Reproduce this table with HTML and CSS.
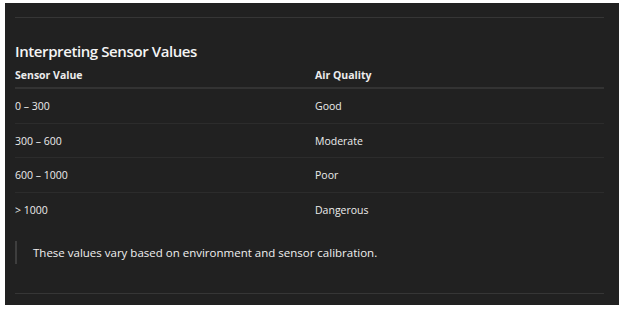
FILE: index.html
```html
<!DOCTYPE html>
<html lang="en">
<head>
<meta charset="utf-8">
<title>Interpreting Sensor Values</title>
<link rel="stylesheet" href="styles.css">
</head>
<body>
<main class="panel">
  <hr class="rule">
  <h3 class="title">Interpreting Sensor Values</h3>
  <div class="table">
    <div class="row head">
      <div class="cell">Sensor Value</div>
      <div class="cell">Air Quality</div>
    </div>
    <div class="row">
      <div class="cell">0 – 300</div>
      <div class="cell">Good</div>
    </div>
    <div class="row">
      <div class="cell">300 – 600</div>
      <div class="cell">Moderate</div>
    </div>
    <div class="row">
      <div class="cell">600 – 1000</div>
      <div class="cell">Poor</div>
    </div>
    <div class="row last">
      <div class="cell">&gt; 1000</div>
      <div class="cell">Dangerous</div>
    </div>
  </div>
  <blockquote class="note">These values vary based on environment and sensor calibration.</blockquote>
  <hr class="rule end">
</main>
</body>
</html>
```
FILE: styles.css
```css
html, body {
  margin: 0;
  background: #ffffff;
}

body {
  padding: 3px 9px 10px 5px;
  font-family: "Open Sans", "Noto Sans", sans-serif;
  color: #ececec;
}

.panel {
  background: #212121;
  height: 302px;
  box-sizing: border-box;
  padding: 14px 15px 0 10px;
  display: flex;
  flex-direction: column;
}

.rule {
  margin: 0;
  border: 0;
  height: 1px;
  background: #363636;
}

.title {
  margin: 23px 0 0;
  font-size: 15px;
  font-weight: 600;
  line-height: 20px;
  color: #f4f4f4;
  letter-spacing: -0.4px;
}

.table {
  margin-top: 5px;
  font-size: 10.5px;
}

.row {
  display: grid;
  grid-template-columns: 300px 1fr;
  align-items: center;
  height: 34.7px;
  box-sizing: border-box;
  border-bottom: 1px solid #2c2c2c;
}

.row.head {
  height: 23px;
  padding-top: 2px;
  align-items: start;
  font-weight: 700;
  border-bottom: 2px solid #333333;
}

.row.last {
  border-bottom: 0;
}

.note {
  margin: 13px 0 0;
  padding: 4px 0 4px 16px;
  border-left: 2px solid #3e3e3e;
  font-size: 11.5px;
  line-height: 15px;
  color: #f0f0f0;
}

.rule.end {
  margin-top: 29px;
}
```
